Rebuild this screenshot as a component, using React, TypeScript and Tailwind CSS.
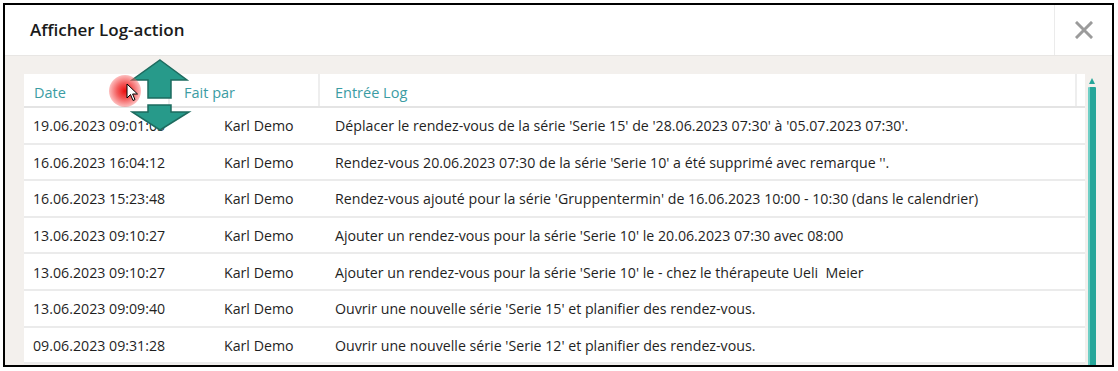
import React from 'react';

const rows = [
  ['19.06.2023 09:01:05', 'Karl Demo', "Déplacer le rendez-vous de la série 'Serie 15' de '28.06.2023 07:30' à '05.07.2023 07:30'."],
  ['16.06.2023 16:04:12', 'Karl Demo', "Rendez-vous 20.06.2023 07:30 de la série 'Serie 10' a été supprimé avec remarque ''."],
  ['16.06.2023 15:23:48', 'Karl Demo', "Rendez-vous ajouté pour la série 'Gruppentermin' de 16.06.2023 10:00 - 10:30 (dans le calendrier)"],
  ['13.06.2023 09:10:27', 'Karl Demo', "Ajouter un rendez-vous pour la série 'Serie 10' le 20.06.2023 07:30 avec 08:00"],
  ['13.06.2023 09:10:27', 'Karl Demo', "Ajouter un rendez-vous pour la série 'Serie 10' le - chez le thérapeute Ueli\u00a0 Meier"],
  ['13.06.2023 09:09:40', 'Karl Demo', "Ouvrir une nouvelle série 'Serie 15' et planifier des rendez-vous."],
  ['09.06.2023 09:31:28', 'Karl Demo', "Ouvrir une nouvelle série 'Serie 12' et planifier des rendez-vous."],
];

function ResizeArrows() {
  return (
    <svg className="absolute left-[125px] top-[53px]" width="62" height="76" viewBox="0 0 62 76">
      <path d="M30 2 L57 22 L41 22 L41 40 L18 40 L18 22 L2 22 Z" fill="#279a8a" stroke="#1d6b5f" strokeWidth="1.5" strokeLinejoin="miter" />
      <path d="M18 47 L41 47 L41 54 L59 54 L30 72 L2 54 L18 54 Z" fill="#279a8a" stroke="#1d6b5f" strokeWidth="1.5" strokeLinejoin="miter" />
    </svg>
  );
}

function Cursor() {
  return (
    <>
      <div
        className="absolute left-[104px] top-[70px] w-[32px] h-[32px] rounded-full"
        style={{ background: 'radial-gradient(circle, rgba(235,0,0,0.95) 0%, rgba(240,50,50,0.8) 35%, rgba(250,110,110,0.45) 70%, rgba(255,170,170,0) 100%)' }}
      />
      <svg className="absolute left-[121px] top-[78px]" width="13" height="19" viewBox="0 0 13 19">
        <path d="M1 1 L1 15 L4.5 11.5 L7 17.5 L9 16.6 L6.6 11 L11.5 11 Z" fill="#fff" stroke="#000" strokeWidth="1" strokeLinejoin="round" />
      </svg>
    </>
  );
}

export default function App() {
  return (
    <div className="w-[1118px] h-[371px] bg-white pt-[3px] pl-[3px]" style={{ fontFamily: '"Open Sans", "Noto Sans", sans-serif' }}>
      <div className="relative w-[1111px] h-[364px] border-2 border-black overflow-hidden flex flex-col">
        {/* Header */}
        <div className="h-[51px] shrink-0 flex bg-white border-b border-[#e8e6e4]">
          <div className="flex-1 flex items-center pl-[25px] pb-[1px] text-[17px] font-semibold text-[#1a1a1a]">Afficher Log-action</div>
          <div className="w-[58px] flex items-center justify-center border-l border-[#ebebeb]">
            <svg width="18" height="18" viewBox="0 0 18 18">
              <path d="M2 2 L16 16 M16 2 L2 16" stroke="#9b9b9b" strokeWidth="3" strokeLinecap="square" />
            </svg>
          </div>
        </div>

        {/* Body */}
        <div className="flex-1 bg-[#f3f0ed] pl-[19px] pt-[18px] flex">
          <div className="w-[1061px] text-[14.2px] text-[#1f1f1f]">
            <div className="h-[34px] flex bg-white border-b-2 border-[#e4e4e4] text-[#3b9ca3] text-[14.5px]">
              <div className="w-[146px] flex items-center pt-[6px] pl-[10px] border-r-2 border-[#eeeeee]">Date</div>
              <div className="w-[150px] flex items-center pt-[6px] pl-[14px] border-r-2 border-[#eeeeee]">Fait par</div>
              <div className="w-[757px] flex items-center pt-[6px] pl-[15px] border-r-2 border-[#eeeeee]">Entrée Log</div>
              <div className="flex-1" />
            </div>
            {rows.map((r, i) => (
              <div key={i} className="h-[36.6px] flex items-center pt-[1px] bg-white border-b-2 border-[#ebebeb] whitespace-nowrap">
                <div className="w-[146px] pl-[9px]">{r[0]}</div>
                <div className="w-[165px] pl-[54px]">{r[1]}</div>
                <div>{r[2]}</div>
              </div>
            ))}
          </div>
          <div className="w-[9px] ml-[2px] flex flex-col items-center pt-[4px]">
            <div className="w-0 h-0 border-l-[3px] border-r-[3px] border-b-[6px] border-l-transparent border-r-transparent border-b-[#26a69a]" />
            <div className="mt-[3px] w-[8px] flex-1 bg-[#26a69a] border-l-2 border-[#6fcfc6] rounded-t-[1px]" />
          </div>
        </div>

        <ResizeArrows />
        <Cursor />
      </div>
    </div>
  );
}
